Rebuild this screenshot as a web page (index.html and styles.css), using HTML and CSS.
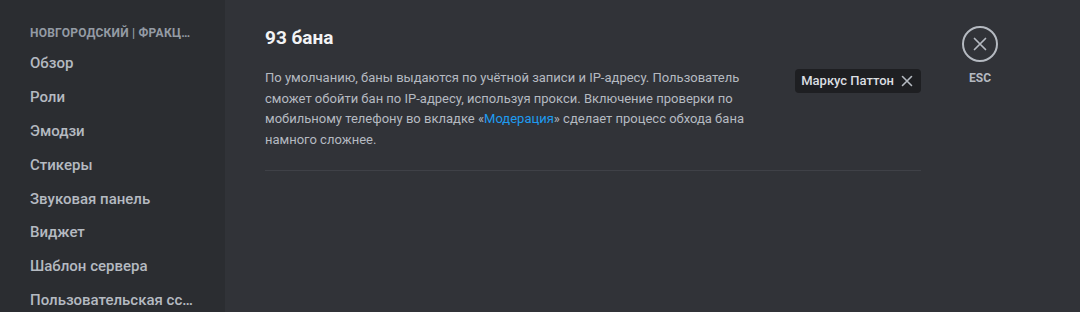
FILE: index.html
```html
<!DOCTYPE html>
<html lang="ru">
<head>
<meta charset="utf-8">
<title>Баны</title>
<link rel="stylesheet" href="styles.css">
</head>
<body>
<div class="app">
  <nav class="sidebar">
    <div class="side-inner">
      <div class="side-header">Новгородский | Фракции</div>
      <div class="side-item">Обзор</div>
      <div class="side-item">Роли</div>
      <div class="side-item">Эмодзи</div>
      <div class="side-item">Стикеры</div>
      <div class="side-item">Звуковая панель</div>
      <div class="side-item">Виджет</div>
      <div class="side-item">Шаблон сервера</div>
      <div class="side-item">Пользовательская ссылка</div>
    </div>
  </nav>
  <main class="main">
    <section class="content">
      <h2 class="title">93 бана</h2>
      <div class="desc-row">
        <p class="desc">По умолчанию, баны выдаются по учётной записи и IP-адресу. Пользователь сможет обойти бан по IP-адресу, используя прокси. Включение проверки по мобильному телефону во вкладке «<a class="link" href="#">Модерация</a>» сделает процесс обхода бана намного сложнее.</p>
        <div class="chip">
          <span class="chip-text">Маркус Паттон</span>
          <svg class="chip-x" width="16" height="16" viewBox="0 0 16 16"><path d="M3.5 3.5 L12.5 12.5 M12.5 3.5 L3.5 12.5" stroke="currentColor" stroke-width="1.6" stroke-linecap="round" fill="none"/></svg>
        </div>
      </div>
      <div class="divider"></div>
    </section>
    <div class="tools">
      <div class="close-btn">
        <svg width="18" height="18" viewBox="0 0 18 18"><path d="M3.5 3.5 L14.5 14.5 M14.5 3.5 L3.5 14.5" stroke="currentColor" stroke-width="1.7" stroke-linecap="round" fill="none"/></svg>
      </div>
      <div class="esc">ESC</div>
    </div>
  </main>
</div>
</body>
</html>
```
FILE: styles.css
```css
* { box-sizing: border-box; }
html, body { margin: 0; padding: 0; height: 100%; }
body {
  font-family: Roboto, "Noto Sans", "Liberation Sans", sans-serif;
  background: #313338;
  overflow: hidden;
}
.app {
  display: flex;
  height: 312px;
}
.sidebar {
  width: 225px;
  flex: none;
  background: #2b2d31;
}
.side-inner {
  padding: 25px 0 0 20px;
  width: 206px;
}
.side-header {
  font-size: 12px;
  font-weight: 700;
  text-transform: uppercase;
  color: #949ba4;
  padding: 0 10px 4px 10px;
  height: 22px;
  line-height: 16px;
  white-space: nowrap;
  overflow: hidden;
  text-overflow: ellipsis;
  letter-spacing: 0.02em;
}
.side-item {
  font-size: 15px;
  line-height: 20px;
  font-weight: 500;
  color: #b5bac1;
  padding: 6px 10px;
  margin-bottom: 1.9px;
  white-space: nowrap;
  overflow: hidden;
  text-overflow: ellipsis;
}
.main {
  flex: 1;
  display: flex;
  padding: 26px 0 0 40px;
}
.content {
  width: 656px;
  flex: none;
}
.title {
  margin: 0;
  font-size: 19px;
  line-height: 24px;
  font-weight: 700;
  color: #f2f3f5;
}
.desc-row {
  display: flex;
  justify-content: space-between;
  align-items: flex-start;
  margin-top: 18px;
}
.desc {
  margin: 0;
  width: 482px;
  font-size: 13px;
  line-height: 20.7px;
  color: #b5bac1;
}
.link {
  color: #1e9bf0;
  text-decoration: none;
}
.chip {
  display: flex;
  align-items: center;
  gap: 5px;
  height: 24px;
  margin-top: 1px;
  padding: 0 6px 0 6px;
  background: #1e1f22;
  border-radius: 4px;
  color: #dbdee1;
}
.chip-text {
  font-size: 13px;
  font-weight: 500;
  line-height: 18px;
  white-space: nowrap;
}
.chip-x { color: #b5bac1; }
.divider {
  margin-top: 19px;
  height: 1px;
  background: #3f4147;
}
.tools {
  margin-left: 41px;
  display: flex;
  flex-direction: column;
  align-items: center;
  width: 36px;
}
.close-btn {
  width: 36px;
  height: 36px;
  border-radius: 50%;
  border: 2px solid #b5bac1;
  display: flex;
  align-items: center;
  justify-content: center;
  color: #b5bac1;
}
.esc {
  margin-top: 8px;
  font-size: 12px;
  font-weight: 700;
  line-height: 16px;
  color: #b5bac1;
}
```
